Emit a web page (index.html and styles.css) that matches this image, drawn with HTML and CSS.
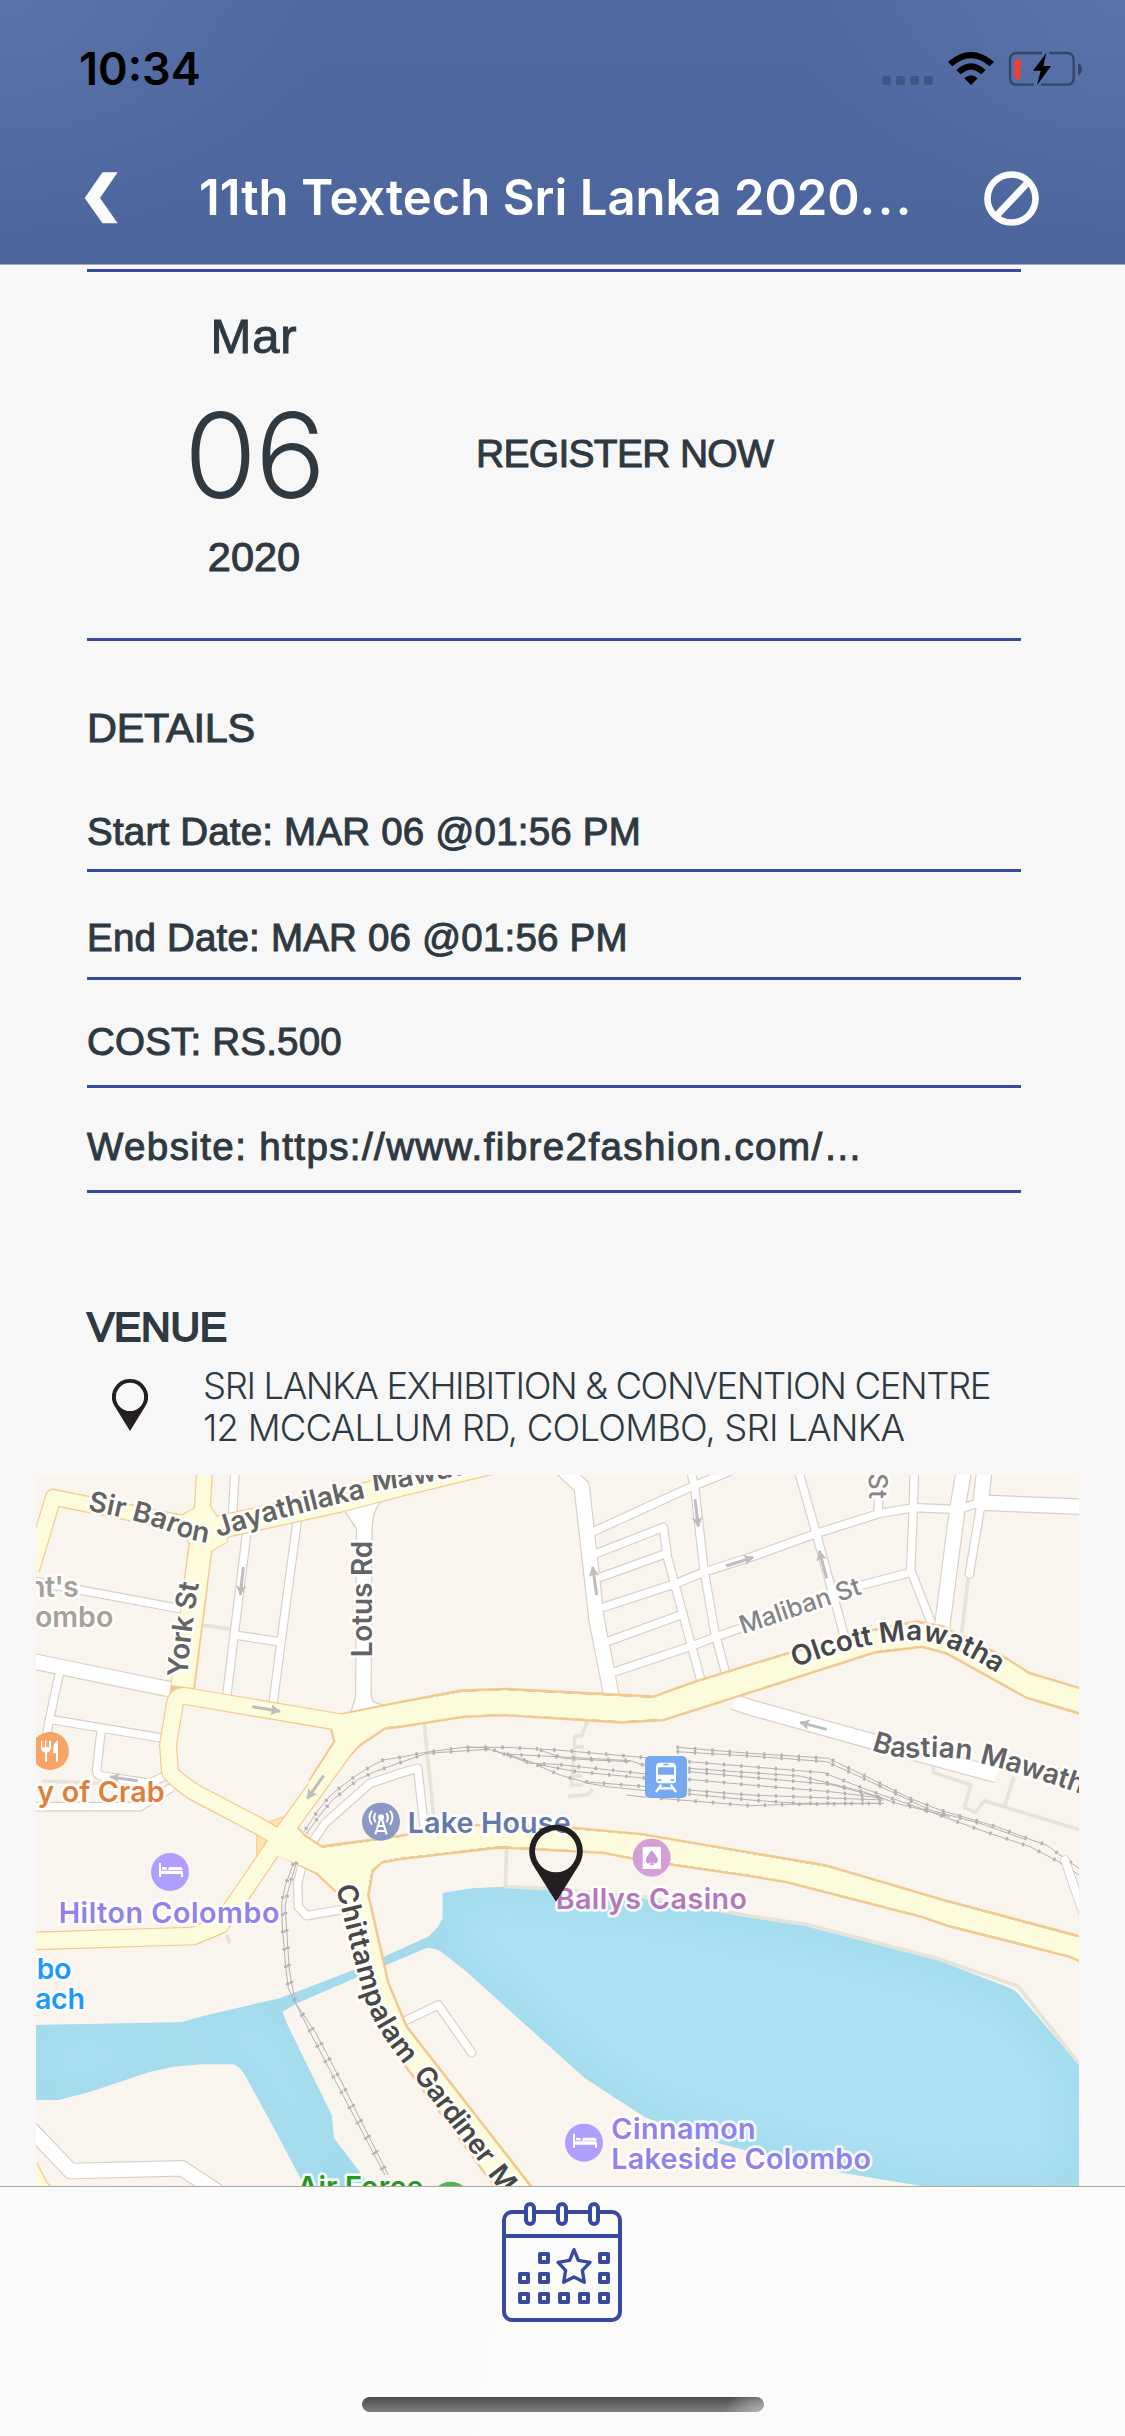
FILE: index.html
```html
<!DOCTYPE html>
<html lang="en">
<head>
<meta charset="utf-8">
<title>Event details</title>
<link rel="stylesheet" href="styles.css">
</head>
<body>
<div class="screen">
<header class="header">
  <div class="status">
    <span class="clock">10:34</span>
    <svg class="status-icons" viewBox="45 60 609 114">
      <g fill="#3f5584"><rect x="51" y="138" width="27" height="27" rx="8"/><rect x="93" y="138" width="27" height="27" rx="8"/><rect x="135" y="138" width="27" height="27" rx="8"/><rect x="177" y="138" width="27" height="27" rx="8"/></g>
      <path d="M249 95Q318 37 387 95L374 109Q318 60 262 109Z"/>
      <path d="M274 120Q318 80 362 120L349 133Q318 105 287 133Z"/>
      <path d="M298 145Q318 127 338 145L318 165Z"/>
      <path d="M531 69H455Q435 69 435 91V143Q435 164 455 164H507M528 164H606Q626 164 626 143V91Q626 69 606 69H553" fill="none" stroke="#354566" stroke-width="7"/>
      <path d="M639 99Q651 105 651 117Q651 130 639 136Z" fill="#354566"/>
      <rect x="449" y="87" width="17" height="61" rx="7" fill="#ff3b30"/>
      <path d="M544 69L504 122H527L516 166L558 108H535Z"/>
    </svg>
  </div>
  <div class="nav">
    <svg class="back" viewBox="84 172 34 52"><path d="M84.700 198L102.500 172.300H117.700L100 198L117.700 223.300H102.500Z" fill="#fbfbfb"/></svg>
    <h1 class="title">11th Textech Sri Lanka 2020<span class="dots">...</span></h1>
    <svg class="ban" viewBox="357 420 166 166"><g fill="none" stroke="#fbfbfb"><circle cx="440" cy="503" r="72.500" stroke-width="20"/><path d="M398 552L486 458" stroke-width="21"/></g></svg>
  </div>
</header>
<main class="content">
  <section class="date-row">
    <div class="date">
      <div class="month">Mar</div>
      <div class="day">06</div>
      <div class="year">2020</div>
    </div>
    <div class="register">REGISTER NOW</div>
  </section>
  <section class="details">
    <h2 class="heading">DETAILS</h2>
    <p class="row start">Start Date: MAR 06 @01:56 PM</p>
    <p class="row end">End Date: MAR 06 @01:56 PM</p>
    <p class="row cost">COST: RS.500</p>
    <p class="row site">Website: https://www.fibre2fashion.com/…</p>
  </section>
  <section class="venue">
    <h2 class="heading venue-heading">VENUE</h2>
    <div class="venue-row">
      <svg class="pin" viewBox="0 0 160 232"><path fill-rule="evenodd" fill="#231f20" d="M80 0A80 80 0 0 1 149 121L80 232L11 121A80 80 0 0 1 80 0ZM80 17A63 63 0 1 0 80 143A63 63 0 1 0 80 17Z"/></svg>
      <address class="address"><div class="line-a">SRI LANKA EXHIBITION &amp; CONVENTION CENTRE</div><div class="line-b">12 MCCALLUM RD, COLOMBO, SRI LANKA</div></address>
    </div>
  </section>
  <svg class="map" viewBox="18 15 3129 2136">
    <defs>
      <marker id="head" viewBox="0 0 30 32" refX="28" refY="16" markerWidth="30" markerHeight="32" markerUnits="userSpaceOnUse" orient="auto"><path d="M0 0L30 16L0 32L6 16Z" fill="#bdbdbd"/></marker>
      <path id="baron" d="M172 122Q330 150 420 186T545 216"/>
      <path id="jaya" d="M564 202Q780 132 1012 83"/>
      <path id="mawa" d="M1030 64L1130 50L1400 -8"/>
      <path id="york" d="M473 622Q478 500 509 330"/>
      <path id="olcott" d="M2296 593Q2430 538 2560 519Q2670 499 2740 527Q2810 552 2902 610"/>
      <path id="bastian" d="M2524 840Q2600 868 2660 862T2840 872"/>
      <path id="mawath" d="M2848 879Q3000 915 3260 1010"/>
      <path id="chitt" d="M918 1250C940 1340 972 1470 997 1560C1017 1640 1070 1720 1132 1795"/>
      <path id="gard" d="M1148 1815L1360 2092"/>
      <path id="maw" d="M1372 2112L1600 2405"/>
      <filter id="soft" x="-10%" y="-10%" width="120%" height="120%"><feGaussianBlur stdDeviation="55"/></filter>
      <path id="lake" d="M18 1665L455 1657L520 1638L750 1585L985 1495L1195 1400L1225 1370L1238 1345V1275Q1238 1268 1250 1267L1330 1255L1425 1250L1560 1258L1850 1285L2160 1343L2325 1368L2720 1470L2930 1550Q2960 1560 2980 1590L3147 1785V2160H2750L2435 2108L2145 2040L2050 2015L1845 1942L1665 1825L1310 1505L1230 1442Q1200 1428 1180 1438L985 1520L800 1600L757 1625L770 1660L905 1935L912 2005L1030 2160H830L735 1980L645 1815Q625 1785 610 1783H510L430 1790L360 1805L180 1865L85 1890H18Z"/>
      <clipPath id="lakeclip"><use href="#lake"/></clipPath>
      <g id="narrow" fill="none">
        <path d="M615 0L608 130M650 190L613 490L590 680M802 150L755 500L728 710M615 495L745 515M0 332L460 418M88 610L60 740L45 820M60 748L400 805M213 785L200 900Q200 915 215 918L360 940L410 915M18 1010H330L420 955M845 1120L885 1060L1020 940L1110 910L1163 895L1188 1120M815 1190L803 1240L805 1310L830 1337L950 1316"/>
        <path d="M1690 185L1980 52L2110 0M1700 250L1900 172L1912 260L2015 640M1710 322L1910 250M1725 410L1940 340L2020 307L2160 262L2360 190L2550 130L2650 113L2780 118M1740 512L1960 432M1755 605L1985 528L2060 500L2490 347L2640 308M1982 0L1995 60L2022 300L2055 490L2090 620M2305 0L2360 195L2445 505M2545 80V130M2653 0L2650 110L2642 300L2712 480M2770 122L2860 95M2855 90L2818 312M1105 1662L1225 1605L1325 1748M3105 1170L3160 1330"/>
      </g>
      <g id="wide" fill="none">
        <path d="M0 572L405 655L450 660M1003 60L1000 730M1590 -10L1655 50L1700 450L1747 690M2802 0L2783 110L2735 480M2863 0L2852 98L3150 110M2110 695L2160 712L2530 815L2900 915M0 1975L122 2103L455 2095L570 2170"/>
      </g>
    </defs>
    <rect x="18" y="15" width="3129" height="2136" fill="#f9f4ed"/>
    <use href="#lake" fill="#ade1f6"/>
    <g clip-path="url(#lakeclip)"><use href="#lake" fill="none" stroke="#9fd7e8" stroke-opacity=".85" stroke-width="100" filter="url(#soft)"/></g>
    <g fill="none" stroke="#e6e4d9" stroke-width="11" stroke-linejoin="round">
      <path d="M515 465L600 477M35 933L215 940M1182 755L1212 1050M1672 755L1655 797L1635 798L1625 945H1660M1635 831H1662M1630 918H1655M1615 980L1675 973L1688 957M2815 320L2795 490M2710 860V908L2823 945L2803 1012L2835 1028L2863 992L3150 1080M2952 920L2925 1005M1430 1135L1426 1250L1560 1256L1850 1282L2160 1338L2325 1362L2720 1465L2963 1548L3147 1780M590 1395L600 1420"/>
    </g>
    <use href="#narrow" stroke="#d8d0c5" stroke-width="29" stroke-linecap="round" stroke-linejoin="round"/>
    <use href="#wide" stroke="#d8d0c5" stroke-width="50" stroke-linejoin="round"/>
    <path d="M945 125L982 180V210H1026V175Q1030 110 1060 90M977 680L960 735L1065 708L1030 695L1024 680" fill="#fff" stroke="#d8d0c5" stroke-width="4"/>
    <use href="#narrow" stroke="#fff" stroke-width="22" stroke-linecap="round" stroke-linejoin="round"/>
    <use href="#wide" stroke="#fff" stroke-width="43" stroke-linejoin="round"/>
    <path d="M680 1070L760 1040L775 1110L680 1180Z" fill="#fde5ae" stroke="#f6c69a" stroke-width="3"/>
    <g stroke="#f4c88d" fill="none" stroke-width="51" stroke-linejoin="round">
      <path d="M5 300L70 82L310 130L520 172"/><path d="M524 0L516 130" />
      <path d="M520 170L505 280L455 680" stroke-width="74"/>
      <path d="M540 178L930 92L1110 45L1400 -25" stroke-width="72"/>
      <path d="M515 103L450 140L475 215L540 245L590 215L600 160L560 140L537 105Z" stroke-width="6"/>
      <path d="M930 757L465 678Q440 675 435 700L414 825L420 905Q425 920 490 965L690 1070L790 1130" stroke-width="54"/>
      <path d="M970 800L745 1110L640 1265L570 1365L490 1398L0 1413" stroke-width="56"/>
      <path d="M0 2090L30 2150L60 2180"/>
    </g>
    <g stroke="#f4c88d" stroke-width="8" stroke-linejoin="round">
      <path d="M925 735L1110 697L1295 662L1425 657L1870 680L1995 635L2280 548L2530 480L2660 455L2740 470L2920 560L2995 608L3160 658V734L2990 683L2750 550L2675 530L2535 547L2220 648L1900 750L1775 757L1425 735L1300 740L1110 770L1065 775L990 825L935 880L870 970L840 930L913 815L905 780Z"/>
      <path d="M790 1060L822 1095L875 1130L1110 1098L1230 1074L1335 1066L1630 1074L1835 1093L2220 1158L2390 1187L2740 1290L3160 1402V1478L3120 1460L2755 1368L2680 1342L2265 1235L2160 1218L1830 1170L1720 1148L1410 1132L1110 1167L1055 1177L1028 1202L1015 1275L1075 1540L1130 1670L1535 2190H1425L1110 1765L1060 1680L1000 1560L945 1290L860 1210L750 1155L740 1110Z"/>
    </g>
    <g stroke="#fcfbdb" fill="none" stroke-width="44" stroke-linejoin="round">
      <path d="M5 300L70 82L310 130L520 172"/><path d="M524 0L516 130"/>
      <path d="M520 170L505 280L457 650" stroke-width="66"/>
      <path d="M540 178L930 92L1110 45L1400 -25" stroke-width="65"/>
      <path d="M515 103L450 140L475 215L540 245L590 215L600 160L560 140L537 105Z" fill="#fcfbdb" stroke="none"/>
      <path d="M940 758L465 678Q440 675 435 700L414 825L420 905Q425 920 490 965L690 1070L790 1130" stroke-width="47"/>
      <path d="M970 800L745 1110L640 1265L570 1365L490 1398L0 1413" stroke-width="49"/>
      <path d="M0 2090L30 2150L60 2180"/>
    </g>
    <g fill="#fcfbdb">
      <path d="M915 738L1110 700L1295 665L1425 660L1870 683L1995 638L2280 551L2530 483L2660 458L2740 473L2920 563L2995 611L3160 661V731L2990 680L2750 547L2675 527L2535 544L2220 645L1900 747L1775 754L1425 732L1300 737L1110 767L1065 772L990 822L935 877L860 980L835 940L916 815L905 770Z"/>
      <path d="M780 1050L822 1098L875 1133L1110 1101L1230 1077L1335 1069L1630 1077L1835 1096L2220 1161L2390 1190L2740 1293L3160 1405V1475L3120 1457L2755 1365L2680 1339L2265 1232L2160 1215L1830 1167L1720 1145L1410 1129L1110 1164L1055 1174L1025 1201L1012 1275L1072 1540L1127 1671L1531 2190H1428L1113 1765L1063 1680L1003 1560L948 1290L862 1208L740 1155L735 1110Z"/>
    </g>
    <g fill="none" stroke="#b4b3b3">
      <path stroke-width="3" d="M1370 832H1300L1180 848L1110 862L1060 870L1030 885L985 912L940 945L900 978L865 1020L822 1085M790 1180L765 1250L755 1300L757 1370L768 1500L775 1555L797 1600L845 1695L920 1840L1065 2115M1370 838L1190 850L1110 878L1035 905L985 928L945 960L905 992L870 1035L830 1090M800 1175L775 1260L765 1310L778 1500L787 1550L797 1600L858 1690L933 1833L1075 2115"/>
      <path stroke-width="3" d="M1310 832H1430L1580 840L1850 863M1370 835L1420 852L1580 860L1800 872L1850 888M1390 840L1500 880L1580 883L1850 912M1430 852L1530 885L1640 905L1850 925M1520 885L1590 915L1660 935L1850 950M1530 840L1600 865L1690 870L1800 875M1660 937L1730 950L1850 962M1790 975L1850 982M1940 832L2160 850L2395 865L2510 920L2640 985L2730 1020L2900 1070L3000 1108L3050 1125L3090 1155L3147 1195M1940 845L2160 858L2390 875L2500 925L2700 1020L2850 1060L2990 1110M1975 875L2160 890L2380 908L2500 955L2700 1025L2850 1080L3000 1130L3080 1172L3147 1215M1975 895L2160 908L2310 918L2500 965L2600 1000L2760 1040M1975 905L2160 922L2400 943L2560 985M1975 928L2160 945L2400 965L2560 985M1975 960L2160 975L2560 990M1975 972L2160 990L2300 1000H2560M1890 985L2160 1007L2280 1003L2560 1000"/>
      <path stroke-width="11" stroke-dasharray="7 45" d="M1370 832H1300L1180 848L1110 862L1060 870L1030 885L985 912L940 945L900 978L865 1020L822 1085M790 1180L765 1250L755 1300L757 1370L768 1500L775 1555L797 1600L845 1695L920 1840L1065 2115M1370 838L1190 850L1110 878L1035 905L985 928L945 960L905 992L870 1035L830 1090M800 1175L775 1260L765 1310L778 1500L787 1550L797 1600L858 1690L933 1833L1075 2115M1310 832H1430L1580 840L1850 863M1370 835L1420 852L1580 860L1800 872L1850 888M1390 840L1500 880L1580 883L1850 912M1430 852L1530 885L1640 905L1850 925M1520 885L1590 915L1660 935L1850 950M1530 840L1600 865L1690 870L1800 875M1940 832L2160 850L2395 865L2510 920L2640 985L2730 1020L2900 1070L3000 1108L3050 1125L3090 1155L3147 1195M1940 845L2160 858L2390 875L2500 925L2700 1020L2850 1060M1975 875L2160 890L2380 908L2500 955L2700 1025L2850 1080L3000 1130L3080 1172M1975 895L2160 908L2310 918L2500 965L2600 1000L2760 1040M1975 905L2160 922L2400 943L2560 985M1975 928L2160 945L2400 965L2560 985M1975 960L2160 975L2560 990M1975 972L2160 990L2300 1000H2560M1890 985L2160 1007L2280 1003L2560 1000"/>
    </g>
    <path d="M3105 1170L3160 1330" fill="none" stroke="#fff" stroke-width="23" stroke-linecap="round"/>
    <g class="arrows" stroke="#bdbdbd" stroke-width="9">
      <path d="M640 291L631 375"/><path d="M667 710L750 724"/><path d="M881 917L832 986"/><path d="M323 932L240 921"/><path d="M1700 375L1688 291"/><path d="M1995 88L2005 170"/><path d="M2088 288L2170 262"/><path d="M2390 325L2368 243"/><path d="M2390 778L2310 757"/>
    </g>
    <g class="street">
      <text><textPath href="#baron" textLength="374">Sir Baron</textPath></text>
      <text><textPath href="#jaya" textLength="460">Jayathilaka</textPath></text>
      <text><textPath href="#mawa">Mawatha</textPath></text>
      <text><textPath href="#york" textLength="284">York St</textPath></text>
      <text transform="translate(1027 562) rotate(-90)" textLength="350">Lotus Rd</text>
      <text><textPath href="#bastian" textLength="304">Bastian</textPath></text>
      <text><textPath href="#mawath" textLength="368">Mawatha</textPath></text>
      <text class="minor" transform="translate(2138 493) rotate(-18.700)" textLength="380">Maliban St</text>
      <text class="minor" transform="translate(2517 10) rotate(90)" textLength="77">St</text>
      <g class="major">
        <text><textPath href="#olcott" textLength="640">Olcott Mawatha</textPath></text>
        <text><textPath href="#chitt" textLength="580">Chittampalam</textPath></text>
        <text><textPath href="#gard" textLength="342">Gardiner</textPath></text>
        <text><textPath href="#maw">Mawatha</textPath></text>
      </g>
    </g>
    <g class="place">
      <text x="-6" y="381" fill="#a5a299" textLength="152">nt's</text>
      <text x="15" y="471" fill="#a5a299" textLength="235">ombo</text>
      <text x="22" y="996" fill="#df7f39" textLength="382">y of Crab</text>
      <text x="1133" y="1088" fill="#6478ae" textLength="489">Lake House</text>
      <text x="86" y="1358" fill="#9181ea" textLength="662">Hilton Colombo</text>
      <text x="20" y="1528" fill="#1b9bf6" textLength="104">bo</text>
      <text x="15" y="1618" fill="#1b9bf6" textLength="150">ach</text>
      <text x="802" y="2182" fill="#2a9722" textLength="378">Air Force</text>
      <text x="1577" y="1318" fill="#b478b8" textLength="574">Ballys Casino</text>
      <text x="1744" y="2007" fill="#9181ea" textLength="433">Cinnamon</text>
      <text x="1744" y="2097" fill="#9181ea" textLength="779">Lakeside Colombo</text>
    </g>
    <circle cx="60" cy="843" r="57" fill="#f6a566"/>
    <path fill="#fff" d="M33 812H37V832H45V810H49V832H57V812H63V832Q63 845 51 848V875H45V848Q33 845 33 832ZM84 810V875H78V850H69Q68 818 84 810Z"/>
    <circle cx="1053" cy="1055" r="57" fill="#8a98c3"/>
    <g fill="none" stroke="#fff" stroke-width="6"><path d="M1036 1093L1050 1048H1056L1070 1093M1044 1068H1062M1040 1083H1066M1037 1057Q1028 1042 1037 1029M1069 1057Q1078 1042 1069 1029M1026 1064Q1011 1042 1026 1022M1080 1064Q1095 1042 1080 1022"/><circle cx="1053" cy="1042" r="6" fill="#fff"/></g>
    <rect x="1845" y="858" width="126" height="126" rx="15" fill="#76a9f1"/>
    <path d="M1888 878H1928Q1938 880 1938 892V930Q1938 940 1928 940H1888Q1878 940 1878 930V892Q1878 880 1888 878Z" fill="#fff"/><path d="M1894 944L1878 966M1922 944L1938 966M1888 955H1928" stroke="#fff" stroke-width="7"/><path d="M1884 892H1932V914H1884ZM1900 881H1916V886H1900ZM1884 928H1894V933H1884ZM1922 928H1932V933H1922Z" fill="#76a9f1"/>
    <circle cx="1865" cy="1163" r="57" fill="#d49fd6"/>
    <rect x="1838" y="1130" width="55" height="67" rx="4" fill="#fff"/><path d="M1865 1141Q1884 1162 1884 1171Q1883 1182 1872 1180L1867 1177L1872 1185H1858L1863 1177L1858 1180Q1847 1182 1847 1171Q1848 1160 1865 1141Z" fill="#cf9bd3"/>
    <g id="hotel"><circle cx="420" cy="1206" r="57" fill="#ae9fff"/><path d="M387 1179H393V1202H454Q459 1202 459 1208V1221H453V1212H393V1221H387ZM396 1191H408L412 1199H396ZM417 1191H450Q458 1192 458 1200H414Z" fill="#fff"/></g>
    <use href="#hotel" x="1242" y="812"/>
    <circle cx="1262" cy="2193" r="58" fill="#4db54d"/>
    <path fill-rule="evenodd" fill="#231f20" d="M1578 1064A80 80 0 0 1 1647 1185L1578 1295L1509 1185A80 80 0 0 1 1578 1064ZM1578 1081A63 63 0 1 0 1578 1207A63 63 0 1 0 1578 1081Z"/>
  </svg>
</main>
<footer class="tabbar">
  <svg class="calendar" viewBox="486 96 360 360" fill="none" stroke="#384a9f" stroke-width="12">
    <rect x="492" y="126" width="348" height="324" rx="24"/><path d="M492 198H840"/>
    <g fill="#fbfbfa"><rect x="558" y="102" width="24" height="60" rx="12"/><rect x="654" y="102" width="24" height="60" rx="12"/><rect x="750" y="102" width="24" height="60" rx="12"/></g>
    <g stroke-linejoin="round"><path d="M600 252h24v24h-24zM780 252h24v24h-24zM540 312h24v24h-24zM600 312h24v24h-24zM780 312h24v24h-24zM540 372h24v24h-24zM600 372h24v24h-24zM660 372h24v24h-24zM720 372h24v24h-24zM780 372h24v24h-24z"/><path stroke-width="10" d="M702 239L715 271L750 277L727 301L733 337L702 321L671 337L677 301L654 277L689 271Z"/></g>
  </svg>
  <div class="home"></div>
</footer>
</div>
</body>
</html>
```
FILE: styles.css
```css
* { box-sizing: border-box; }
body { margin: 0; background: #f7f7f7; }
h1, h2, p { margin: 0; font-weight: 400; }
svg { display: block; }
.screen {
  width: 1125px; height: 2436px; overflow: hidden;
  display: flex; flex-direction: column;
  background: #f7f7f7; color: #2e3942;
  font-family: "Liberation Sans", Arial, sans-serif;
}
.header {
  flex: none; height: 265px; border-bottom: 1px solid #a6a8ad;
  background:
    radial-gradient(ellipse 330px 240px at 0 0, rgba(100, 127, 181, .5), transparent),
    radial-gradient(ellipse 330px 240px at 100% 0, rgba(100, 127, 181, .5), transparent),
    linear-gradient(#5069a1, #4c659c);
}
.status { height: 132px; padding: 6px 42px 0 79px; display: flex; justify-content: space-between; align-items: center; }
.clock { font: 600 45px/60px Inter, sans-serif; color: #000; }
.status-icons { width: 203px; height: 38px; }
.nav { height: 132px; padding: 0 86px 0 84px; display: flex; align-items: center; }
.back { width: 34px; height: 52px; }
.title { flex: 1; padding-left: 81px; font: 600 49px/60px Inter, sans-serif; color: #fff; white-space: nowrap; }
.dots { letter-spacing: 2.5px; }
.ban { width: 55px; height: 55px; }
.content { flex: none; height: 1921px; padding-top: 4px; overflow: hidden; }
.date-row { margin: 0 104px 0 87px; height: 372px; border: solid #384a9f; border-width: 3px 0; display: grid; grid-template-columns: 389px 1fr; -webkit-text-stroke: 1px #2e3942; }
.date { padding: 36px 55px 0 0; text-align: center; }
.month { font-size: 49px; line-height: 56px; letter-spacing: .8px; }
.day { margin-top: 31px; font: 300 118px/120px Inter, sans-serif; letter-spacing: -2px; -webkit-text-stroke: 0; }
.year { margin-top: 17px; font-size: 41.5px; line-height: 50px; }
.register { padding-top: 157px; font-size: 39px; line-height: 50px; letter-spacing: -.7px; }
.details { margin: 0 104px 0 87px; -webkit-text-stroke: 1px #2e3942; }
.heading { padding-top: 62px; font-size: 41.5px; line-height: 50px; letter-spacing: -.3px; }
.row { border-bottom: 3px solid #384a9f; font-size: 38.5px; line-height: 44px; letter-spacing: .2px; white-space: nowrap; }
.start { padding: 57px 0 15px; }
.end { padding: 44px 0 17px; }
.cost { padding: 40px 0 21px; }
.site { padding: 37px 0 21px; letter-spacing: 1.4px; }
.venue { height: 282px; padding-left: 87px; }
.venue-heading { padding-top: 109px; font-size: 41px; -webkit-text-stroke: 1.8px #2e3942; }
.venue-row { display: flex; margin-top: 13px; }
.pin { width: 36px; height: 52px; margin: 14px 55px 0 25px; }
.address { font: 300 36.5px/42px Inter, sans-serif; white-space: nowrap; }
.line-a { letter-spacing: -1.4px; }
.line-b { letter-spacing: -.8px; }
.map { width: 1043px; height: 712px; margin-left: 36px; }
.arrows path { marker-end: url(#head); }
.street, .place { font-family: Inter, sans-serif; font-weight: 600; stroke: #fff; stroke-opacity: .85; stroke-width: 16px; stroke-linejoin: round; paint-order: stroke; }
.street { font-size: 84px; fill: #646464; }
.major { fill: #484848; }
.minor { font-size: 76px; font-weight: 500; fill: #858585; }
.place { font-size: 86px; }
.tabbar { flex: 1; border-top: 1px solid #aaa9a4; background: linear-gradient(100deg, #f9fafa, #fbfbfa 45%, #fcfbfa 80%, #fafbfb); display: flex; flex-direction: column; align-items: center; padding-top: 15px; }
.calendar { width: 120px; height: 120px; margin-right: 1px; }
.home { width: 402px; height: 15px; border-radius: 8px; margin-top: 75px; background: radial-gradient(ellipse 40px 24px at 100% 100%, #b5b5b5, transparent), linear-gradient(#4c4c4c, #808080); }
```
